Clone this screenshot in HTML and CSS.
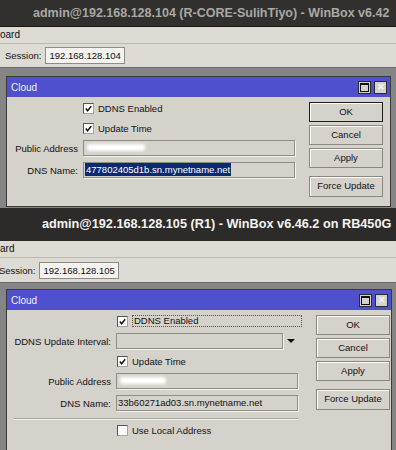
FILE: index.html
```html
<!DOCTYPE html>
<html lang="en">
<head>
    <meta charset="UTF-8">
    <meta name="viewport" content="width=device-width, initial-scale=1.0">
    <title>WinBox - Cloud</title>
    <link rel="stylesheet" href="styles.css">
</head>
<body>
    <!-- first session (inactive window) -->
    <div class="win win-a">
        <div class="titlebar">admin@192.168.128.104 (R-CORE-SulihTiyo) - WinBox v6.42</div>
        <div class="menubar">oard</div>
        <div class="toolbar">
            <span>Session:</span>
            <span class="session-box">192.168.128.104</span>
        </div>
        <div class="mdi">
            <div class="dialog dlg-a">
                <div class="dlg-title">
                    <span class="dlg-name">Cloud</span>
                    <span class="tbtn"><span class="max-ico"></span></span>
                    <span class="tbtn close">&#x2715;</span>
                </div>
                <div class="dlg-body">
                    <div class="form">
                        <div class="row cb-row">
                            <span class="lbl"></span>
                            <span class="check"><svg viewBox="0 0 10 10"><polyline points="2,5 4,7.5 8,2.5"/></svg></span>
                            <span class="cb-text">DDNS Enabled</span>
                        </div>
                        <div class="row cb-row">
                            <span class="lbl"></span>
                            <span class="check"><svg viewBox="0 0 10 10"><polyline points="2,5 4,7.5 8,2.5"/></svg></span>
                            <span class="cb-text">Update Time</span>
                        </div>
                        <div class="row field-row">
                            <span class="lbl">Public Address</span>
                            <span class="field"><span class="smudge"></span></span>
                        </div>
                        <div class="row field-row gap-big">
                            <span class="lbl">DNS Name:</span>
                            <span class="field"><span class="selected">477802405d1b.sn.mynetname.net</span></span>
                        </div>
                    </div>
                    <div class="buttons">
                        <span class="btn default">OK</span>
                        <span class="btn">Cancel</span>
                        <span class="btn">Apply</span>
                        <span class="btn force">Force Update</span>
                    </div>
                </div>
            </div>
        </div>
    </div>

    <!-- second session (active window) -->
    <div class="win win-b">
        <div class="titlebar">admin@192.168.128.105 (R1) - WinBox v6.46.2 on RB450G</div>
        <div class="menubar">ard</div>
        <div class="toolbar">
            <span>Session:</span>
            <span class="session-box">192.168.128.105</span>
        </div>
        <div class="mdi">
            <div class="dialog dlg-b">
                <div class="dlg-title">
                    <span class="dlg-name">Cloud</span>
                    <span class="tbtn"><span class="max-ico"></span></span>
                    <span class="tbtn close">&#x2715;</span>
                </div>
                <div class="dlg-body">
                    <div class="form">
                        <div class="row cb-row">
                            <span class="lbl"></span>
                            <span class="check"><svg viewBox="0 0 10 10"><polyline points="2,5 4,7.5 8,2.5"/></svg></span>
                            <span class="cb-text focus">DDNS Enabled</span>
                        </div>
                        <div class="row field-row">
                            <span class="lbl">DDNS Update Interval:</span>
                            <span class="field short"></span>
                            <span class="arrow"></span>
                        </div>
                        <div class="row cb-row">
                            <span class="lbl"></span>
                            <span class="check"><svg viewBox="0 0 10 10"><polyline points="2,5 4,7.5 8,2.5"/></svg></span>
                            <span class="cb-text">Update Time</span>
                        </div>
                        <div class="row field-row">
                            <span class="lbl">Public Address</span>
                            <span class="field"><span class="smudge small"></span></span>
                        </div>
                        <div class="row field-row gap-big">
                            <span class="lbl">DNS Name:</span>
                            <span class="field">33b60271ad03.sn.mynetname.net</span>
                        </div>
                        <div class="separator"></div>
                        <div class="row cb-row">
                            <span class="lbl"></span>
                            <span class="check"></span>
                            <span class="cb-text">Use Local Address</span>
                        </div>
                    </div>
                    <div class="buttons">
                        <span class="btn">OK</span>
                        <span class="btn">Cancel</span>
                        <span class="btn">Apply</span>
                        <span class="btn force">Force Update</span>
                    </div>
                </div>
            </div>
        </div>
    </div>
</body>
</html>
```

FILE: styles.css
```css
* {
    box-sizing: border-box;
}
body {
    margin: 0;
    width: 396px;
    height: 450px;
    overflow: hidden;
    background: #858585;
    font-family: "Liberation Sans", Arial, sans-serif;
    font-size: 9.5px;
    color: #111;
}
.win {
    display: flex;
    flex-direction: column;
    overflow: hidden;
}
.win-a {
    height: 208px;
}
.win-b {
    height: 242px;
}

/* ubuntu title bars */
.titlebar {
    flex: none;
    background: #31302e;
    font-family: "Liberation Sans", Arial, sans-serif;
    font-weight: bold;
    font-size: 12.7px;
    white-space: nowrap;
    overflow: hidden;
}
.win-a .titlebar {
    height: 27px;
    line-height: 26px;
    padding-left: 33px;
    font-size: 12.5px;
    color: #a9a8a4;
    border-bottom: 1px solid #161616;
}
.win-b .titlebar {
    height: 33px;
    line-height: 33px;
    padding-left: 42px;
    color: #f4f3ef;
    background: #2c2b29;
}

.menubar {
    flex: none;
    height: 17px;
    line-height: 16px;
    background: #dedbd4;
    border-bottom: 1px solid #bcb8b0;
    font-size: 10px;
}
.toolbar {
    flex: none;
    display: flex;
    align-items: center;
    gap: 4px;
    background: #dedbd4;
    border-bottom: 1px solid #6b6b6b;
}
.win-a .toolbar {
    height: 24px;
    padding-left: 5px;
}
.win-b .toolbar {
    height: 25px;
    padding-left: 0;
    margin-left: -1px;
}
.session-box {
    height: 17px;
    line-height: 15px;
    padding: 0 3px;
    border: 1px solid #8f8c86;
    background: #f4f3f0;
}
.win-b .session-box {
    width: 80px;
}

.mdi {
    flex: 1;
    background: #858585;
    overflow: hidden;
}
.win-a .mdi {
    padding: 8px 5px 0 6px;
}
.win-b .mdi {
    padding: 6px 4px 0 6px;
}

/* winbox dialog */
.dialog {
    background: #d5d2cb;
    border: 1px solid #3a3a3a;
    display: flex;
    flex-direction: column;
}
.dlg-a {
    height: 131px;
}
.dlg-b {
    height: 170px;
}
.dlg-title {
    flex: none;
    height: 20px;
    display: flex;
    align-items: center;
    gap: 3px;
    padding: 0 3px 0 4px;
    background: #4f50cd;
    color: #f2f2ff;
    font-size: 10px;
}
.dlg-name {
    flex: 1;
}
.tbtn {
    width: 13px;
    height: 13px;
    background: #d5d2cb;
    border: 1px solid #2b2b2b;
    display: flex;
    align-items: center;
    justify-content: center;
    font-size: 9px;
    font-weight: bold;
    line-height: 1;
}
.max-ico {
    width: 9px;
    height: 9px;
    border: 1px solid #111;
    border-top-width: 2px;
}
.dlg-body {
    flex: 1;
    display: flex;
    align-items: flex-start;
    gap: 14px;
}
.form {
    flex: none;
    padding-top: 1px;
}
.row {
    display: flex;
    align-items: center;
    gap: 5px;
}
.cb-row {
    height: 20px;
}
.field-row {
    height: 16px;
}
.field-row + .field-row,
.cb-row + .field-row,
.field-row + .cb-row {
    margin-top: 2px;
}
.row.gap-big {
    margin-top: 6px;
}
.lbl {
    flex: none;
    text-align: right;
    white-space: nowrap;
}
.dlg-a .lbl {
    width: 71px;
}
.dlg-a .field {
    width: 212px;
}
.dlg-b .lbl {
    width: 104px;
}
.dlg-b .field {
    width: 182px;
}
.field {
    height: 16px;
    line-height: 14px;
    padding: 0 1px;
    border: 1px solid #8f8c86;
    box-shadow: 1px 1px 0 #f4f3f0;
    white-space: nowrap;
    overflow: hidden;
}
.dlg-b .field.short {
    width: 167px;
}
.selected {
    display: inline-block;
    background: #0c2a72;
    color: #fff;
    padding: 0 1px;
    line-height: 13px;
}
.smudge {
    display: inline-block;
    width: 58px;
    height: 7px;
    margin: 3px 0 0 2px;
    background: #fff;
    border-radius: 3px;
    filter: blur(1.4px);
}
.smudge.small {
    width: 46px;
}
.arrow {
    width: 0;
    height: 0;
    margin-left: -1px;
    border-left: 4px solid transparent;
    border-right: 4px solid transparent;
    border-top: 4px solid #111;
}
.check {
    flex: none;
    width: 11px;
    height: 11px;
    background: #fff;
    border: 1px solid #555;
    border-right-color: #a7a49e;
    border-bottom-color: #a7a49e;
    display: flex;
}
.dlg-b .check {
    margin-left: 1px;
}
.check svg {
    width: 9px;
    height: 9px;
    fill: none;
    stroke: #111;
    stroke-width: 1.6;
}
.cb-text {
    margin-left: -1px;
    white-space: nowrap;
}
.cb-text.focus {
    width: 170px;
    height: 12px;
    line-height: 10px;
    padding-left: 1px;
    border: 1px dotted #555;
}
.separator {
    margin: 7px 0 0 7px;
    width: 284px;
    border-top: 1px solid #a9a6a0;
    border-bottom: 1px solid #f2f1ee;
}

.buttons {
    flex: none;
    display: flex;
    flex-direction: column;
    gap: 3px;
    padding-top: 5px;
}
.btn {
    width: 74px;
    height: 20px;
    line-height: 18px;
    text-align: center;
    border: 1px solid #8a877f;
    box-shadow: inset 1px 1px 0 #fbfbf9;
}
.btn.default {
    border-color: #1e1e1e;
}
.btn.force {
    margin-top: 5px;
    height: 21px;
}
```
